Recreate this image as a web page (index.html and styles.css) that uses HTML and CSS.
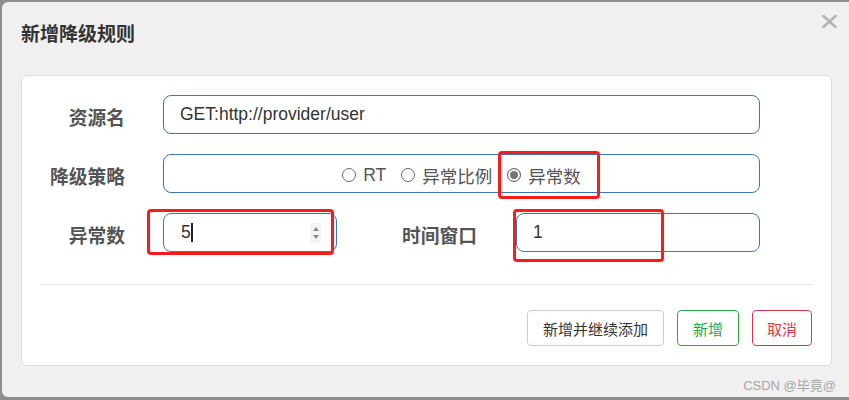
FILE: index.html
```html
<!DOCTYPE html>
<html lang="zh-CN">
<head>
  <meta charset="UTF-8" />
  <meta name="viewport" content="width=device-width, initial-scale=1" />
  <title>新增降级规则</title>
  <link rel="stylesheet" href="styles.css">
</head>
<body>

  <div class="modal">
    <div class="modal-header">
      <h4 class="modal-title">新增降级规则</h4>
      <span class="close">
        <svg width="15" height="13" viewBox="0 0 15 13">
          <path d="M1.5 1 L13.5 12 M13.5 1 L1.5 12" stroke="#b4b4b4" stroke-width="2.6" stroke-linecap="square" fill="none"/>
        </svg>
      </span>
    </div>

    <div class="modal-body">
      <form class="rule-form">
        <div class="form-row">
          <label class="form-label">资源名</label>
          <input class="form-control" type="text" value="GET:http://provider/user">
        </div>

        <div class="form-row">
          <label class="form-label">降级策略</label>
          <div class="form-control radio-group">
            <span class="radio-item"><i class="radio"></i>RT</span>
            <span class="radio-item"><i class="radio"></i>异常比例</span>
            <span class="radio-item"><i class="radio checked"></i>异常数</span>
          </div>
        </div>

        <div class="form-row">
          <label class="form-label">异常数</label>
          <div class="form-control number-field">
            <span class="value">5</span><i class="caret"></i>
            <span class="spin"><i class="up"></i><i class="down"></i></span>
          </div>
          <label class="form-label label-wide">时间窗口</label>
          <input class="form-control" type="text" value="1">
        </div>
      </form>

      <div class="divider"></div>

      <div class="actions">
        <button class="btn btn-default">新增并继续添加</button>
        <button class="btn btn-success">新增</button>
        <button class="btn btn-danger">取消</button>
      </div>
    </div>
  </div>

  <!-- red annotation boxes drawn over the form -->
  <div class="mark mark-radio"></div>
  <div class="mark mark-count"></div>
  <div class="mark mark-window"></div>

  <div class="watermark">CSDN @毕竟@</div>

</body>
</html>
```

FILE: styles.css
```css
* { box-sizing: border-box; margin: 0; padding: 0; }

body {
  font-family: "Liberation Sans", "Noto Sans CJK SC", sans-serif;
  background: #8e8e8e;
  height: 400px;
  overflow: hidden;
  position: relative;
}

.modal {
  margin: 2px 0 0 2px;
  width: 870px; height: 395px;
  background: #f0f0f0;
  border-radius: 6px 0 0 6px;
  padding: 20px 0 0 19px;
  position: relative;
}

.modal-header {
  height: 26px;
  display: flex;
  align-items: center;
}
.modal-title {
  font-size: 19px; font-weight: bold;
  color: #333;
  line-height: 26px;
}
.close {
  position: absolute;
  left: 820px; top: 13px;
  display: flex;
}

.modal-body {
  margin-top: 27px;
  width: 811px;
  background: #fff;
  border: 1px solid #dcdcdc;
  border-radius: 6px;
  padding: 19px 19px 19px 18px;
}

.rule-form {
  display: flex;
  flex-direction: column;
  gap: 20px;
  padding-right: 52px;
}
.form-row {
  display: flex;
  align-items: center;
  height: 39px;
}
.form-label {
  flex: 0 0 85px;
  margin-right: 38px;
  text-align: right;
  font-size: 18.75px; font-weight: bold;
  color: #555;
  padding-top: 3px;
}
.form-label.label-wide {
  flex-basis: 140px;
  margin-right: 39px;
}

.form-control {
  flex: 1;
  min-width: 0;
  height: 39px;
  border: 1px solid #3c76b3;
  border-radius: 8px;
  padding: 0 16px;
  font-family: inherit;
  font-size: 17.5px;
  color: #333;
  background: #fff;
  outline: none;
}

.radio-group {
  display: flex;
  justify-content: center;
  align-items: center;
  gap: 15px;
  padding-top: 4px;
  color: #555;
}
.radio-item {
  display: flex;
  align-items: center;
  gap: 7px;
}
.radio {
  width: 14px; height: 14px;
  border: 1px solid #6a6a6a;
  border-radius: 50%;
  background: #fff;
  margin-top: -2px;
}
.radio.checked {
  background: #777;
  box-shadow: inset 0 0 0 2px #fff;
}

.number-field {
  flex: 0 0 174px;
  display: flex;
  align-items: center;
  padding: 0 15px 0 17px;
}
.caret {
  width: 1.5px; height: 19px;
  background: #222;
  margin-left: 0.5px;
}
.spin {
  margin-left: auto;
  width: 11px; height: 20px;
  background: #f4f4f4;
  display: flex;
  flex-direction: column;
  justify-content: space-around;
  align-items: center;
  padding: 2px 0;
}
.spin .up, .spin .down {
  width: 0; height: 0;
  border-left: 3px solid transparent;
  border-right: 3px solid transparent;
}
.spin .up { border-bottom: 4px solid #8a8a8a; }
.spin .down { border-top: 4px solid #8a8a8a; }

.divider {
  height: 1px;
  background: #e2e2e2;
  margin-top: 32px;
}

.actions {
  margin-top: 25px;
  display: flex;
  justify-content: flex-end;
  gap: 13px;
}
.btn {
  height: 36px;
  padding: 0 15px;
  font-family: inherit;
  font-size: 15px;
  background: #fff;
  border: 1px solid #ccc;
  border-radius: 4px;
  color: #333;
}
.btn-success { border-color: #28a745; color: #28a745; }
.btn-danger { border-color: #dc3545; color: #dc3545; padding: 0 14px; }

.mark {
  position: absolute;
  border: 3px solid #ff1a1a;
  border-radius: 4px;
}
.mark-radio { left: 498px; top: 151px; width: 102px; height: 48px; }
.mark-count { left: 147px; top: 209px; width: 187px; height: 46px; }
.mark-window { left: 513px; top: 209px; width: 151px; height: 53px; }

.watermark {
  position: absolute;
  right: 13px; top: 375px;
  font-size: 13px;
  color: #a6a6a6;
}
```
